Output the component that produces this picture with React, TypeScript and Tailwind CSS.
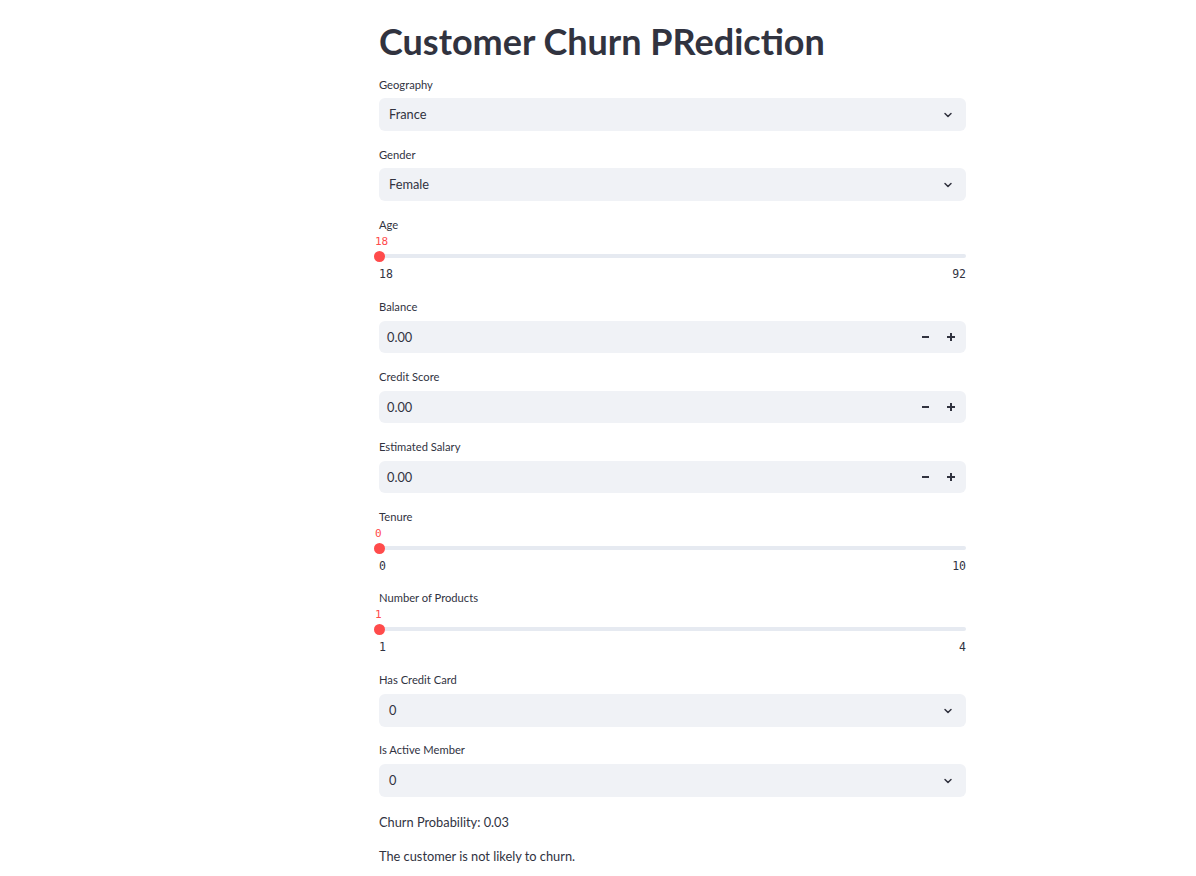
import React from "react";

const font = { fontFamily: "Lato, 'Noto Sans', sans-serif" };

function Label({ text, mt }: { text: string; mt: string }) {
  return (
    <div className={`${mt} h-[16px] text-[11.2px] leading-[16px] text-[#31333f]`}>{text}</div>
  );
}

function Chevron() {
  return (
    <svg width="12" height="12" viewBox="0 0 24 24" fill="none" stroke="#31333f" strokeWidth="3" strokeLinecap="round" strokeLinejoin="round">
      <path d="M6 9l6 6 6-6" />
    </svg>
  );
}

function Select({ value, mt }: { value: string; mt: string }) {
  return (
    <div className={`${mt} flex h-[33px] items-center justify-between rounded-[6px] bg-[#f0f2f6] pl-[10px] pr-[12px] text-[12.8px] text-[#31333f]`}>
      <span className="pt-[1px]">{value}</span>
      <Chevron />
    </div>
  );
}

function NumberInput({ mt }: { mt: string }) {
  return (
    <div className={`${mt} flex h-[32px] items-center justify-between rounded-[6px] bg-[#f0f2f6] pl-[8px] pr-[2px] text-[12.8px] text-[#31333f]`}>
      <span className="pt-[1px]">0.00</span>
      <div className="flex h-full items-center">
        <div className="flex h-full w-[26px] items-center justify-center">
          <div className="h-[2px] w-[7px] bg-[#31333f]" />
        </div>
        <div className="flex h-full w-[26px] items-center justify-center">
          <svg width="8" height="8" viewBox="0 0 8 8">
            <rect x="0" y="3" width="8" height="2" fill="#31333f" />
            <rect x="3" y="0" width="2" height="8" fill="#31333f" />
          </svg>
        </div>
      </div>
    </div>
  );
}

function Slider({ value, min, max }: { value: string; min: string; max: string }) {
  const mono = { fontFamily: "'DejaVu Sans Mono', 'Liberation Mono', monospace" };
  return (
    <div>
      <div className="mt-[2px] h-[14px] text-[11px] leading-[14px] text-[#ff4b4b]" style={mono}>
        <span className="-ml-[4px]">{value}</span>
      </div>
      <div className="relative h-[14px]">
        <div className="absolute left-0 right-0 top-[5px] h-[4px] rounded-full bg-[#e6eaf1]" />
        <div className="absolute left-[-5.5px] top-[1.5px] h-[11px] w-[11px] rounded-full bg-[#ff4b4b]" />
      </div>
      <div className="mt-[4px] flex h-[14px] justify-between text-[11.5px] leading-[14px] text-[#31333f]" style={mono}>
        <span>{min}</span>
        <span>{max}</span>
      </div>
    </div>
  );
}

export default function App() {
  return (
    <div className="min-h-[876px] w-full bg-white" style={font}>
      <div className="ml-[379px] w-[587px] pb-[10px]">
        <h1 className="pt-[19px] h-[63px] text-[36px] font-bold leading-[44px] text-[#31333f]">
          Customer Churn PRediction
        </h1>
        <Label text="Geography" mt="mt-[14px]" />
        <Select value="France" mt="mt-[5px]" />
        <Label text="Gender" mt="mt-[16px]" />
        <Select value="Female" mt="mt-[5px]" />
        <Label text="Age" mt="mt-[16px]" />
        <Slider value="18" min="18" max="92" />
        <Label text="Balance" mt="mt-[18px]" />
        <NumberInput mt="mt-[6px]" />
        <Label text="Credit Score" mt="mt-[16px]" />
        <NumberInput mt="mt-[6px]" />
        <Label text="Estimated Salary" mt="mt-[16px]" />
        <NumberInput mt="mt-[6px]" />
        <Label text="Tenure" mt="mt-[16px]" />
        <Slider value="0" min="0" max="10" />
        <Label text="Number of Products" mt="mt-[17px]" />
        <Slider value="1" min="1" max="4" />
        <Label text="Has Credit Card" mt="mt-[18px]" />
        <Select value="0" mt="mt-[6px]" />
        <Label text="Is Active Member" mt="mt-[15px]" />
        <Select value="0" mt="mt-[6px]" />
        <div className="mt-[15px] h-[20px] text-[12.8px] leading-[20px] text-[#31333f]">Churn Probability: 0.03</div>
        <div className="mt-[14px] h-[20px] text-[12.8px] leading-[20px] text-[#31333f]">The customer is not likely to churn.</div>
      </div>
    </div>
  );
}
